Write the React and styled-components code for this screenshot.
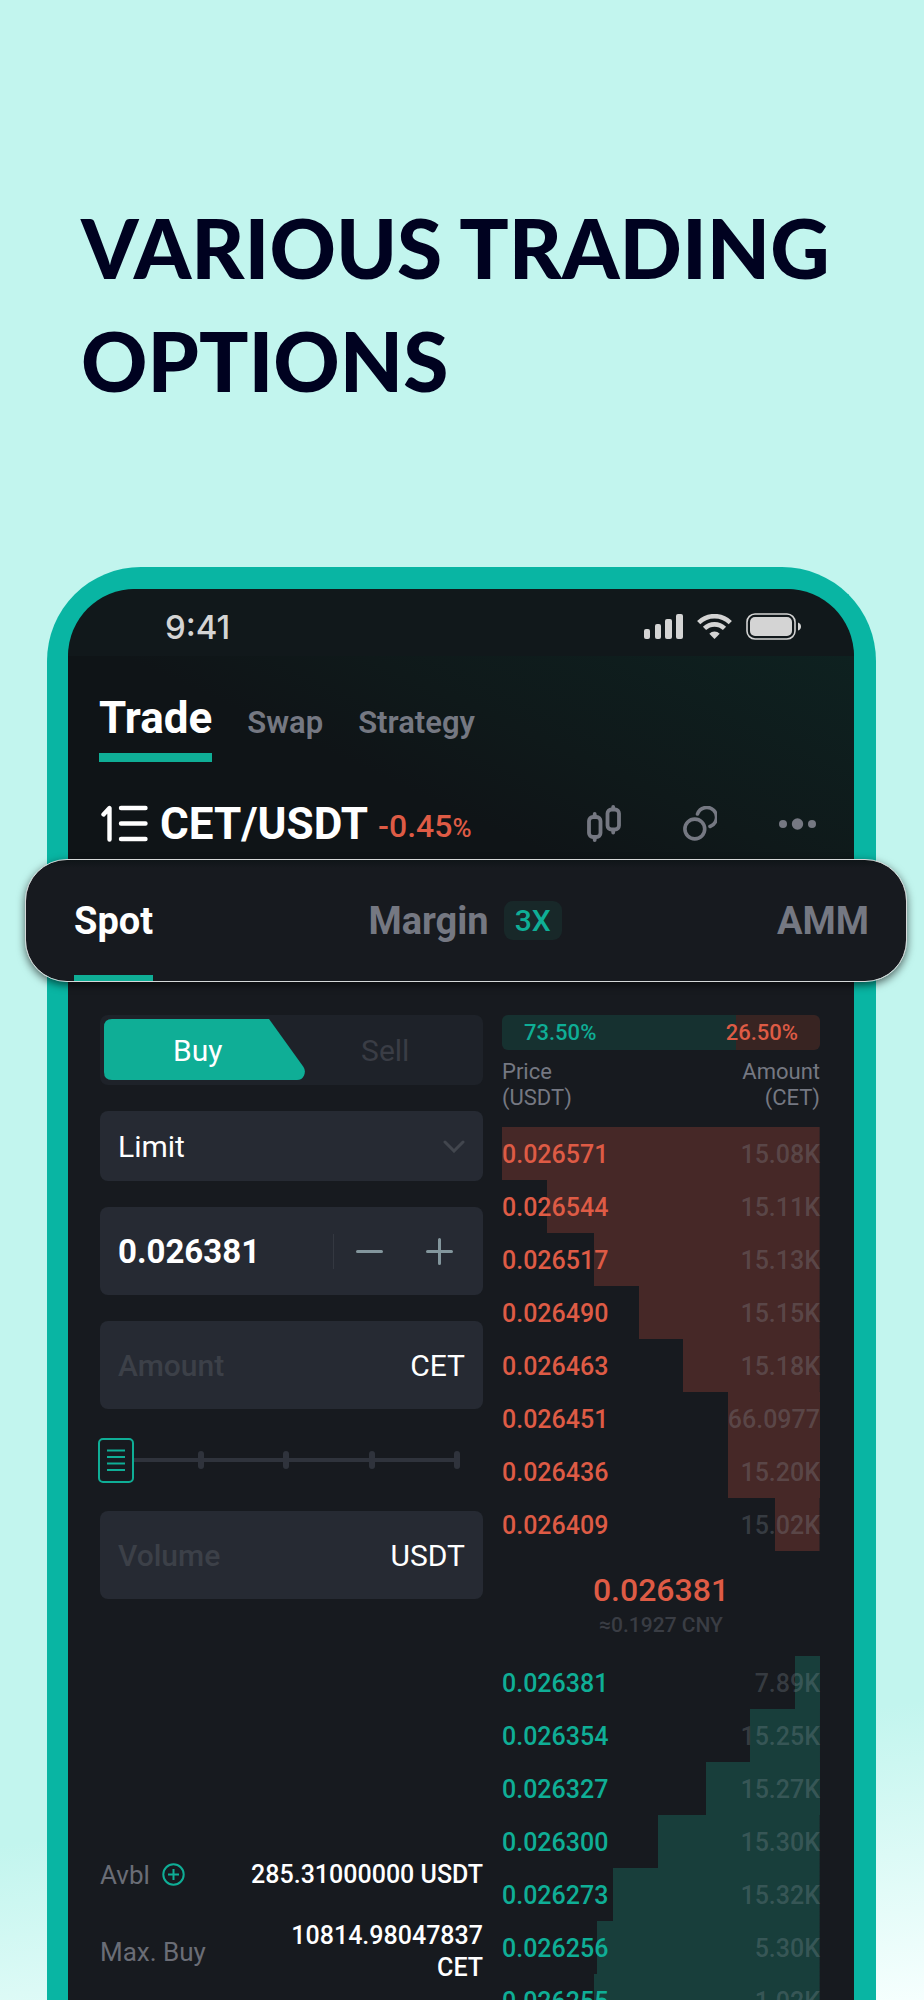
import React, { useState } from "react"
import styled, { createGlobalStyle } from "styled-components"

const teal = "#0fae96"
const red = "#de5b45"
const muted = "#757882"
const faint = "rgba(150, 160, 168, 0.26)"
const field = "#262a33"
const screen = "#171a1f"

const GlobalStyle = createGlobalStyle`
  * {
    box-sizing: border-box;
  }
  body {
    margin: 0;
    font-family: Roboto, "Liberation Sans", sans-serif;
  }
  button,
  input,
  select {
    padding: 0;
    border: 0;
    background: none;
    color: inherit;
    font: inherit;
    outline: none;
  }
  button {
    cursor: pointer;
  }
  svg {
    display: block;
  }
`

const Page = styled.main`
  height: 100vh;
  min-height: 1200px;
  overflow: hidden;
  background: linear-gradient(171deg, #c2f5ee 0 86%, #f6fffe 100%);
`
const Title = styled.h1`
  margin: 0;
  padding: 191px 80px 0 81px;
  color: #000220;
  font-family: Lato, sans-serif;
  font-size: 82px;
  font-weight: 900;
  line-height: 113px;
`
const Phone = styled.section`
  margin: 150px 48px 0 47px;
  border: solid #09b5a3;
  border-width: 22px 22px 0 21px;
  border-radius: 94px 94px 0 0;
  background: ${screen};
`
const StatusBar = styled.div`
  display: flex;
  align-items: center;
  justify-content: space-between;
  height: 67px;
  padding: 8px 53px 0 97px;
  border-radius: 72px 72px 0 0;
  background: #11181b;
  color: #d4d4d4;
  font-family: Inter, sans-serif;
  font-size: 33px;
  font-weight: 500;
  line-height: 38px;
`
const StatusIcons = styled.div`
  display: flex;
  align-items: center;
  gap: 14px;
`
const Header = styled.header`
  padding: 31px 32px 0 31px;
  background: linear-gradient(205deg, #0e2120 0%, #0f191a 40%, #0f1417 60%);
`
const MainTabs = styled.nav`
  display: flex;
  align-items: flex-end;
  gap: 35px;
`
const MainTab = styled.button`
  height: 75px;
  padding: ${p => (p.$active ? "0 0 4px" : "5px 0 0")};
  border-bottom: 9px solid ${p => (p.$active ? teal : "transparent")};
  color: ${p => (p.$active ? "#fff" : muted)};
  font-size: ${p => (p.$active ? 44 : 31)}px;
  font-weight: ${p => (p.$active ? 700 : 600)};
  line-height: 52px;
`
const PairRow = styled.div`
  display: flex;
  align-items: center;
  height: 97px;
  padding: 26px 6px 0 2px;
`
const PairName = styled.h2`
  margin: 0 10px 0 12px;
  color: #fff;
  font-size: 44px;
  font-weight: 700;
  line-height: 52px;
`
const Change = styled.span`
  flex: 1;
  padding-top: 5px;
  color: ${red};
  font-size: 32px;
  font-weight: 500;

  small {
    font-size: 26px;
  }
`
const PairTools = styled.div`
  display: flex;
  align-items: center;
  gap: 62px;
  color: ${muted};
`
const MarketBar = styled.nav`
  position: relative;
  display: flex;
  align-items: stretch;
  justify-content: space-between;
  height: 123px;
  margin: 0 -53px 0 -43px;
  padding: 0 37px 0 48px;
  border: 1px solid #d5d8d8;
  border-radius: 42px;
  background: linear-gradient(#0f1518, ${screen} 8px);
  box-shadow: 0 3px 8px rgba(0, 0, 0, 0.6);
`
const MarketTab = styled.button`
  display: flex;
  align-items: center;
  gap: 15px;
  padding-top: 6px;
  border-bottom: 6px solid ${p => (p.$active ? teal : "transparent")};
  color: ${p => (p.$active ? "#fff" : muted)};
  font-size: 38px;
  font-weight: 700;
`
const Leverage = styled.span`
  padding: 0 11px;
  border-radius: 9px;
  background: #182829;
  color: ${teal};
  font-size: 30px;
  font-weight: 500;
  line-height: 39px;
`
const Trading = styled.div`
  display: grid;
  grid-template-columns: minmax(0, 383fr) minmax(0, 318fr);
  gap: 19px;
  padding: 33px 34px 0 32px;
`
const Form = styled.form`
  display: flex;
  flex-direction: column;
  gap: 26px;
`
const SideSwitch = styled.div`
  display: grid;
  grid-template-columns: 1fr 1fr;
  position: relative;
  height: 70px;
  padding: 0 4px;
  border-radius: 8px;
  background: #1e2229;
  font-size: 30px;
`
const BuyShape = styled.svg`
  position: absolute;
  left: 4px;
  top: 4px;
`
const SideButton = styled.button`
  position: relative;
  color: ${p => (p.$active ? "#fff" : "#3a3d45")};
`
const Field = styled.label`
  display: flex;
  align-items: center;
  height: ${p => (p.$short ? 70 : 88)}px;
  padding: 0 18px;
  border-radius: 8px;
  background: ${field};
  color: #fff;
  font-size: 30px;
`
const OrderType = styled.select`
  flex: 1;
  appearance: none;
`
const FieldInput = styled.input`
  flex: 1;
  min-width: 0;
  font-size: ${p => (p.$price ? 33 : 30)}px;
  font-weight: ${p => (p.$price ? 700 : 500)};

  &::placeholder {
    color: #3c4048;
    opacity: 1;
  }
`
const Stepper = styled.div`
  display: flex;
  align-items: center;
  gap: 43px;
  height: 35px;
  padding: 0 12px 0 22px;
  border-left: 1px solid #343841;
`
const SliderBox = styled.div`
  display: grid;
  align-items: center;
  height: 50px;
  margin: 0 23px 0 -2px;

  > * {
    grid-area: 1 / 1;
  }
`
const Track = styled.div`
  display: flex;
  align-items: center;
  justify-content: space-between;
  height: 4px;
  margin-left: 20px;
  background: #2f333c;
`
const Tick = styled.i`
  width: 6px;
  height: 18px;
  border-radius: 3px;
  background: #2f333c;
`
const Handle = styled.svg`
  background: ${screen};
`
const Range = styled.input`
  width: 100%;
  margin: 0;
  opacity: 0;
`
const Balances = styled.dl`
  margin: 211px 0 0;
`
const Balance = styled.div`
  display: flex;
  align-items: center;
  justify-content: space-between;
  height: 77px;
  font-size: 26px;
  line-height: 32px;

  dt {
    display: flex;
    align-items: center;
    gap: 12px;
    color: #6a6d76;
  }
  dd {
    max-width: 240px;
    margin: 0;
    color: #fff;
    font-size: 25px;
    font-weight: 500;
    text-align: right;
  }
`
const Ratio = styled.div`
  display: flex;
  align-items: center;
  justify-content: space-between;
  height: 35px;
  padding: 0 22px;
  border-radius: 6px;
  background: linear-gradient(90deg, #163130 73.5%, #382422 73.5%);
  color: ${teal};
  font-size: 22px;
  font-weight: 500;

  span:last-child {
    color: ${red};
  }
`
const Book = styled.table`
  width: 100%;
  border-collapse: collapse;
  font-size: 25px;
  font-weight: 500;

  th {
    height: 77px;
    padding: 0 0 7px;
    color: ${muted};
    font-size: 22px;
    font-weight: 400;
    line-height: 26px;
    text-align: left;
  }
  th:last-child {
    text-align: right;
  }
`
const Level = styled.tr`
  height: 53px;
  background: linear-gradient(${p => (p.$bid ? "#183e3b, #183e3b" : "#462827, #462827")}) right / var(--depth) 100% no-repeat;

  td {
    padding: 2px 0 0;
    color: ${p => (p.$bid ? teal : red)};
  }
  td:last-child {
    color: ${faint};
    text-align: right;
  }
`
const LastPrice = styled.td`
  height: 105px;
  padding: 0;
  color: #3a3d44;
  font-size: 21px;
  line-height: 28px;
  text-align: center;

  strong {
    display: block;
    color: ${red};
    font-size: 32px;
    font-weight: 500;
    line-height: 42px;
  }
`

const asks = [
  ["0.026571", "15.08K", 100],
  ["0.026544", "15.11K", 86],
  ["0.026517", "15.13K", 71],
  ["0.026490", "15.15K", 57],
  ["0.026463", "15.18K", 43],
  ["0.026451", "66.0977", 29],
  ["0.026436", "15.20K", 29],
  ["0.026409", "15.02K", 14],
]
const bids = [
  ["0.026381", "7.89K", 8],
  ["0.026354", "15.25K", 22],
  ["0.026327", "15.27K", 36],
  ["0.026300", "15.30K", 51],
  ["0.026273", "15.32K", 65],
  ["0.026256", "5.30K", 70],
  ["0.026255", "1.02K", 71],
]

const Signal = () => (
  <svg width="39" height="25" viewBox="0 0 39 25" fill="currentColor">
    <rect x="0" y="15" width="6" height="10" rx="2" />
    <rect x="11" y="10" width="6" height="15" rx="2" />
    <rect x="21" y="5" width="7" height="20" rx="2" />
    <rect x="32" y="0" width="7" height="25" rx="2" />
  </svg>
)
const Wifi = () => (
  <svg width="35" height="25" viewBox="0 0 35 25" fill="none" stroke="currentColor" strokeWidth="4.6">
    <path d="M1.7 8.6a22.6 22.6 0 0 1 31.6 0" />
    <path d="M7.5 14.4a14.4 14.4 0 0 1 20 0" />
    <path d="M17.5 25l-5.2-5.3a7.3 7.3 0 0 1 10.4 0z" fill="currentColor" stroke="none" />
  </svg>
)
const Battery = () => (
  <svg width="55" height="27" viewBox="0 0 55 27">
    <rect x="1" y="1" width="48" height="25" rx="8" fill="none" stroke="currentColor" strokeWidth="1.6" />
    <rect x="4" y="4" width="42" height="19" rx="5" fill="currentColor" />
    <path d="M52 9.500q3 1 3 4t-3 4z" fill="currentColor" />
  </svg>
)
const ListIcon = () => (
  <svg width="47" height="37" viewBox="0 0 47 37" fill="none" stroke="#fff" strokeWidth="4.4" strokeLinecap="round" strokeLinejoin="round">
    <path d="M2.500 9.500L8.500 3v31.500M20 3h24.500M20 18.500h24.500M20 34h24.500" />
  </svg>
)
const Candles = () => (
  <svg width="34" height="37" viewBox="0 0 34 37" fill="none" stroke="currentColor" strokeWidth="3.8" strokeLinecap="round">
    <rect x="2" y="12" width="11.500" height="20" rx="4" />
    <rect x="20.500" y="4.500" width="11.500" height="20" rx="4" />
    <path d="M7.700 9v2M7.700 33v2M26.200 2v2M26.200 25.500v2" />
  </svg>
)
const Rings = () => (
  <svg width="34" height="35" viewBox="0 0 34 35" fill="none" stroke="currentColor" strokeWidth="3.6" strokeLinecap="round">
    <circle cx="11.800" cy="23" r="9.900" />
    <path d="M14.500 8A9.800 9.800 0 1 1 27 20.500" />
  </svg>
)
const Dots = () => (
  <svg width="37" height="12" viewBox="0 0 37 12" fill="currentColor">
    <circle cx="4" cy="6" r="4" />
    <circle cx="18.500" cy="6" r="5.700" />
    <circle cx="33" cy="6" r="4" />
  </svg>
)
const Sign = ({ plus }) => (
  <svg width="27" height="27" viewBox="0 0 27 27" stroke="#83969d" strokeWidth="3" strokeLinecap="round">
    <path d={plus ? "M1.500 13.500h24M13.500 1.500v24" : "M1.500 13.500h24"} />
  </svg>
)

const Levels = ({ rows, bid }) => (
  <tbody>
    {rows.map(([price, amount, depth]) => (
      <Level key={price} $bid={bid} style={{ "--depth": `${depth}%` }}>
        <td>{price}</td>
        <td>{amount}</td>
      </Level>
    ))}
  </tbody>
)

const OrderForm = () => {
  const [side, setSide] = useState("Buy")
  const [price, setPrice] = useState("0.026381")
  const step = by => setPrice((Number(price) + by).toFixed(6))

  return (
    <Form>
      <SideSwitch>
        <BuyShape width="201" height="61" viewBox="0 0 201 61" fill={teal}>
          <path d="M8 0H165L199.500 48Q202 52 200 56.500Q198 61 193 61H8Q0 61 0 53V8Q0 0 8 0Z" />
        </BuyShape>
        {["Buy", "Sell"].map(s => (
          <SideButton key={s} type="button" $active={side === s} onClick={() => setSide(s)}>
            {s}
          </SideButton>
        ))}
      </SideSwitch>
      <Field $short>
        <OrderType aria-label="Order type">
          <option>Limit</option>
          <option>Market</option>
        </OrderType>
        <svg width="22" height="13" viewBox="0 0 22 13" fill="none" stroke="#42464e" strokeWidth="3" strokeLinecap="round">
          <path d="M2 2l9 9 9-9" />
        </svg>
      </Field>
      <Field as="div">
        <FieldInput $price aria-label="Price" value={price} onChange={e => setPrice(e.target.value)} />
        <Stepper>
          <button type="button" aria-label="Decrease price" onClick={() => step(-0.000001)}>
            <Sign />
          </button>
          <button type="button" aria-label="Increase price" onClick={() => step(0.000001)}>
            <Sign plus />
          </button>
        </Stepper>
      </Field>
      <Field>
        <FieldInput placeholder="Amount" aria-label="Amount" />
        CET
      </Field>
      <SliderBox>
        <Track>
          <i />
          <Tick />
          <Tick />
          <Tick />
          <Tick />
        </Track>
        <Handle width="36" height="45" viewBox="0 0 36 45" fill="none" stroke={teal} strokeWidth="2">
          <rect x="1" y="1" width="34" height="43" rx="4" />
          <path d="M9 12.500h18M9 19h18M9 25.500h18M9 32h18" />
        </Handle>
        <Range type="range" min="0" max="100" defaultValue="0" aria-label="Share of balance" />
      </SliderBox>
      <Field>
        <FieldInput placeholder="Volume" aria-label="Volume" />
        USDT
      </Field>
      <Balances>
        <Balance>
          <dt>
            Avbl
            <svg width="23" height="23" viewBox="0 0 23 23" fill="none" stroke={teal} strokeWidth="2">
              <circle cx="11.500" cy="11.500" r="10.200" />
              <path d="M6 11.500h11M11.500 6v11" />
            </svg>
          </dt>
          <dd>285.31000000 USDT</dd>
        </Balance>
        <Balance>
          <dt>Max. Buy</dt>
          <dd>10814.98047837 CET</dd>
        </Balance>
      </Balances>
    </Form>
  )
}

const OrderBook = () => (
  <div>
    <Ratio>
      <span>73.50%</span>
      <span>26.50%</span>
    </Ratio>
    <Book>
      <thead>
        <tr>
          <th>
            Price
            <br />
            (USDT)
          </th>
          <th>
            Amount
            <br />
            (CET)
          </th>
        </tr>
      </thead>
      <Levels rows={asks} />
      <tbody>
        <tr>
          <LastPrice colSpan="2">
            <strong>0.026381</strong>
            ≈0.1927 CNY
          </LastPrice>
        </tr>
      </tbody>
      <Levels rows={bids} bid />
    </Book>
  </div>
)

export default () => (
  <Page>
    <GlobalStyle />
    <Title>VARIOUS TRADING OPTIONS</Title>
    <Phone>
      <StatusBar>
        <span>9:41</span>
        <StatusIcons>
          <Signal />
          <Wifi />
          <Battery />
        </StatusIcons>
      </StatusBar>
      <Header>
        <MainTabs>
          <MainTab $active>Trade</MainTab>
          <MainTab>Swap</MainTab>
          <MainTab>Strategy</MainTab>
        </MainTabs>
        <PairRow>
          <ListIcon />
          <PairName>CET/USDT</PairName>
          <Change>
            -0.45<small>%</small>
          </Change>
          <PairTools>
            <button aria-label="Chart">
              <Candles />
            </button>
            <button aria-label="Swap pair">
              <Rings />
            </button>
            <button aria-label="More">
              <Dots />
            </button>
          </PairTools>
        </PairRow>
      </Header>
      <MarketBar>
        <MarketTab $active>Spot</MarketTab>
        <MarketTab>
          Margin <Leverage>3X</Leverage>
        </MarketTab>
        <MarketTab>AMM</MarketTab>
      </MarketBar>
      <Trading>
        <OrderForm />
        <OrderBook />
      </Trading>
    </Phone>
  </Page>
)
